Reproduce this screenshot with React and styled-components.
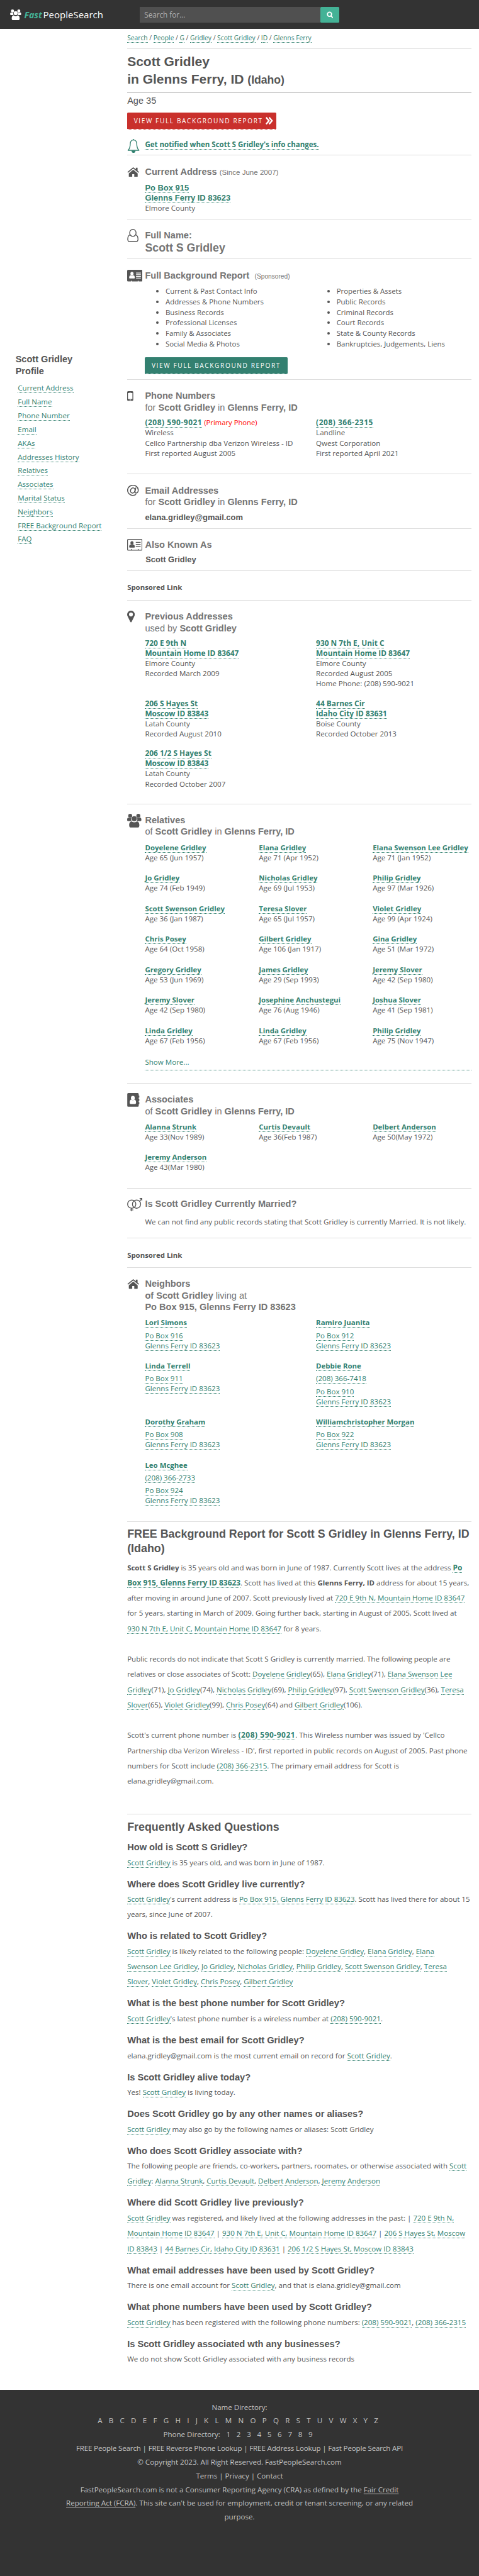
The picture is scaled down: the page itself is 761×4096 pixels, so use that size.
import React from 'react';
import styled, { createGlobalStyle } from 'styled-components';

const GlobalStyle = createGlobalStyle`
  html { font-size: 8.0855px; }
  body {
    margin: 0;
    background: #fff;
    color: #555;
    font-family: "Open Sans", "Noto Sans", sans-serif;
    -webkit-text-size-adjust: none;
  }
  * { box-sizing: border-box; }
  small, em, b, u { line-height: 0; }
`;

const heading = `font-family: "Liberation Sans", Arial, sans-serif; font-weight: 700;`;
/* a hairline is always a full device pixel; the negative margin keeps the rhythm at 0.1rem */
const hairline = (color = '#dcdcdc') => `border-bottom: 1px solid ${color}; margin-bottom: calc(0.1rem - 1px);`;

const Page = styled.div`
  display: flex;
  flex-direction: column;
  min-height: 506.6rem;
  font-size: 1.432rem;
  line-height: 2rem;
  white-space: nowrap;
  overflow: hidden;
`;

const Header = styled.header`
  display: flex;
  height: 5.7rem;
  background: #333;
`;
const Logo = styled.div`
  display: flex;
  width: 27.4rem;
  padding: 1.9rem 0 0 2rem;
  color: #fff;
  svg { width: 2.2rem; height: 2.1rem; }
`;
const LogoText = styled.div`
  margin-left: 0.55rem;
  font-size: 1.86rem;
  line-height: 2.2rem;
  em {
    color: #44b296;
    font-weight: 700;
    font-size: 1.76rem;
    margin-right: 0.2rem;
  }
`;
const SearchBox = styled.div`
  display: flex;
  width: 39.3rem;
  height: 3.1rem;
  margin-top: 1.3rem;
`;
const SearchInput = styled.div`
  flex: 1;
  padding-left: 0.95rem;
  background: #505050;
  color: #b0b0b0;
  font-size: 1.45rem;
  line-height: 3.2rem;
`;
const SearchButton = styled.div`
  display: flex;
  align-items: center;
  justify-content: center;
  width: 3.8rem;
  background: #44b296;
  border-radius: 0.2rem;
  svg { width: 1.3rem; height: 1.4rem; margin-top: 0.2rem; }
`;

const Body = styled.div`
  display: flex;
`;
const Sidebar = styled.aside`
  width: 25rem;
  padding: 63.8rem 0 0 3.05rem;
`;
const SidebarTitle = styled.h2`
  ${heading}
  margin: 0 0 0.9rem;
  font-size: 1.8rem;
  line-height: 2.3rem;
`;
const SidebarList = styled.ul`
  list-style: none;
  margin: 0;
  padding: 0 0 0 0.45rem;
  li { line-height: 2.7rem; }
`;
const Content = styled.main`
  width: 67.6rem;
`;

const A = styled.a`
  color: #328170;
  border-bottom: 1px dotted #328170;
  font-weight: ${(p) => (p.$bold ? 700 : 'inherit')};
  ${(p) => p.$bold && 'font-size: 1.414rem;'}
  ${(p) => p.$digits && 'font-size: 1.47rem; line-height: 0;'}
  ${(p) => p.$phone && 'font-size: 1.47rem; letter-spacing: 0.07rem; line-height: 0;'}
`;
const B = styled.b`
  font-size: 1.414rem;
`;

const Breadcrumb = styled.nav`
  height: 3.9rem;
  border-bottom: 1px solid #dcdcdc;
  font-size: 1.268rem;
  line-height: 3.6rem;
`;
const Title = styled.h1`
  ${heading}
  margin: 0.8rem 0 0;
  padding-bottom: 0.9rem;
  font-size: 2.6rem;
  line-height: 3.4rem;
  ${hairline('#949494')}
  small { font-size: 2.18rem; }
`;
const Age = styled.div`
  ${heading}
  font-weight: 400;
  font-size: 1.8rem;
  line-height: 3.3rem;
  margin-bottom: 0.7rem;
`;
const Button = styled.a`
  display: flex;
  align-items: center;
  width: ${(p) => p.$width};
  height: ${(p) => p.$height};
  padding-left: 1.3rem;
  background: ${(p) => p.$color};
  border-bottom: 1px dotted #fff;
  border-radius: 0.2rem 0.2rem 0 0;
  color: #fff;
  font-size: 1.25rem;
  letter-spacing: 0.2rem;
  svg { width: 1.5rem; height: 1.5rem; margin-left: 0.5rem; }
`;
const Notify = styled.div`
  display: flex;
  gap: 1rem;
  height: 5.1rem;
  padding-top: 1.9rem;
  border-bottom: 1px solid #dcdcdc;
  font-size: 1.422rem;
  line-height: 2.3rem;
  a { font-size: inherit; }
  svg { width: 2.5rem; height: 2.7rem; color: #328170; }
`;

const SectionBox = styled.section`
  display: grid;
  grid-template-columns: 3.5rem minmax(0, 1fr);
  padding-bottom: ${(p) => p.$bottom || '1rem'};
  ${hairline()}
`;
const IconSlot = styled.div`
  padding-top: ${(p) => p.$top};
  color: #555;
  svg { display: block; width: ${(p) => p.$w}rem; height: ${(p) => p.$h}rem; }
`;
const SectionBody = styled.div`
  padding-top: ${(p) => p.$top};
`;
const Heading = styled.h2`
  ${heading}
  margin: 0 0 ${(p) => p.$gap || '0.9rem'};
  color: #747474;
  font-size: 1.8rem;
  line-height: 2.3rem;
  span { font-weight: 400; }
`;
const Note = styled.small`
  font-weight: 400;
  font-size: ${(p) => p.$size};
  margin-left: ${(p) => p.$gap || 0};
`;
const BigName = styled.div`
  ${heading}
  color: #747474;
  font-size: 2.2rem;
  line-height: 2.5rem;
`;
const Strong = styled.div`
  ${heading}
  font-size: 1.6rem;
  line-height: 2rem;
  padding-left: ${(p) => p.$indent || 0};
  a { font-size: inherit; }
`;
const Grid = styled.div`
  display: grid;
  grid-template-columns: ${(p) => (p.$cols === 3 ? '22.37rem 22.37rem 22.37rem' : '33.6rem 33.6rem')};
`;
const Cell = styled.div`
  padding-bottom: ${(p) => p.$gap || '2rem'};
`;
const Block = styled.div`
  margin-top: 0.5rem;
`;
const Primary = styled.span`
  color: #f00;
  font-size: 1.395rem;
  line-height: 0;
`;
const Bullets = styled.ul`
  margin: 0;
  padding-left: 4.03rem;
  font-size: 1.413rem;
  li { line-height: 2.06rem; }
`;
const BulletRow = styled.div`
  display: grid;
  grid-template-columns: 33.6rem 33.6rem;
  margin-bottom: 1.55rem;
`;
const ShowMore = styled.a`
  display: block;
  margin-bottom: 1.5rem;
  padding-bottom: 0.17rem;
  border-bottom: 1px dotted #328170;
  color: #328170;
  line-height: 2.5rem;
`;
const Sponsored = styled.div`
  padding: 2.32rem 0 1.38rem;
  font-size: 1.41rem;
  font-weight: 700;
  ${hairline()}
`;

const Report = styled.section`
  padding-bottom: 1.94rem;
  ${hairline()}
`;
const BigHeading = styled.h2`
  ${heading}
  margin: 0 0 ${(p) => p.$bottom};
  padding-top: ${(p) => p.$top};
  font-size: 2.21rem;
  line-height: 2.8rem;
`;
const Text = styled.p`
  margin: 0 0 3rem;
  line-height: 3rem;
`;
const Question = styled.h3`
  ${heading}
  margin: 1.58rem 0 0.265rem;
  font-size: 1.812rem;
  line-height: 2.4rem;
`;
const Answer = styled.p`
  margin: 0;
  line-height: 3rem;
`;
const Tight = styled.span`
  letter-spacing: ${(p) => p.$by};
`;

const Footer = styled.footer`
  flex: 1;
  margin-top: 4.57rem;
  padding-top: 2rem;
  background: #333;
  color: #c3c3c3;
  text-align: center;
  line-height: 2.7rem;
  u { text-underline-offset: 0.2rem; }
`;
const Letters = styled.div`
  display: flex;
  justify-content: center;
  gap: ${(p) => p.$gap};
  padding-right: 0.6rem;
`;

/* icons */
const People = () => (
  <svg viewBox="0 0 28 27" fill="currentColor">
    <circle cx="6" cy="4" r="3.9" />
    <circle cx="22" cy="4" r="3.9" />
    <path d="M0 12c0-3 1-4.500 2.400-4.500 2 1.300 4.500 1.300 6 .6C7.300 10.500 8 13 9 14.200H2c-1.300 0-2-1-2-2.200zM28 12c0-3-1-4.500-2.400-4.500-2 1.300-4.500 1.300-6 .6 1.100 2.400.4 4.900-.6 6.100H26c1.300 0 2-1 2-2.200z" />
    <circle cx="14" cy="9.500" r="5" />
    <path d="M4 22.500c0-4.500 1.500-7.500 5-7.500 3 2.100 7 2.100 10 0 3.500 0 5 3 5 7.500 0 3-1 4.500-3.500 4.500h-13C5 27 4 25.500 4 22.500z" />
  </svg>
);
const Magnifier = () => (
  <svg viewBox="0 0 14 14" fill="none" stroke="#fff" strokeWidth="2.400" strokeLinecap="round">
    <circle cx="6" cy="5.800" r="4.400" />
    <path d="M9.500 9.500l3 3" />
  </svg>
);
const Chevrons = () => (
  <svg viewBox="0 0 15 15" fill="none" stroke="#fff" strokeWidth="3">
    <path d="M1 1l5.500 6.500L1 14M7 1l5.500 6.500L7 14" />
  </svg>
);
const Bell = () => (
  <svg viewBox="0 0 25 27" fill="none" stroke="currentColor" strokeWidth="1.700" strokeLinejoin="round">
    <path d="M12.500 2C8 2 6.300 5.500 6.100 9.500 6 15 5 19 1.800 22.300h21.400C20 19 19 15 18.900 9.500 18.700 5.500 17 2 12.500 2z" />
    <path d="M12.500 0v2" />
    <path d="M9.500 23.500a3 3 0 0 0 6 0z" fill="currentColor" />
  </svg>
);
const House = () => (
  <svg viewBox="0 0 24 19" fill="currentColor">
    <path d="M12 4.600L3.300 12v6c0 .6.4 1 1 1H10v-5.500h4V19h5.700c.6 0 1-.4 1-1v-6z" />
    <path d="M12.900.5a1.400 1.400 0 0 0-1.800 0L.5 9.400l1.200 1.500L12 2.400l10.300 8.500 1.200-1.500-3-2.500V.8h-3.400v3.300z" />
  </svg>
);
const User = () => (
  <svg viewBox="0 0 22 26" fill="none" stroke="currentColor" strokeWidth="1.700">
    <ellipse cx="11" cy="7.800" rx="6.300" ry="6.900" />
    <path d="M5.600 11.500C2.500 12.500.9 15.500.9 20c0 3 1.500 5.100 4.200 5.100h11.800c2.700 0 4.200-2.100 4.200-5.100 0-4.500-1.600-7.500-4.700-8.500" />
  </svg>
);
const Card = () => (
  <svg viewBox="0 0 30 23">
    <path fill="currentColor" d="M2 0h26a2 2 0 0 1 2 2v19a2 2 0 0 1-2 2h-5.500v-1.500h-1.600V23H9v-1.500H7.400V23H2a2 2 0 0 1-2-2V2a2 2 0 0 1 2-2z" />
    <g fill="#fff">
      <ellipse cx="9.500" cy="7.500" rx="3.100" ry="3.600" />
      <path d="M4 15.500c0-3 1-4.600 2.900-4.800 1.600 1.200 3.600 1.200 5.200 0 1.900.2 2.900 1.800 2.900 4.800 0 1-.6 1.600-1.500 1.600h-8c-.9 0-1.500-.6-1.500-1.600z" />
      <path d="M17.500 5.500H27V7h-9.500zM17.500 9H27v1.500h-9.500zM17.500 12.500H27V14h-9.500zM17.500 15.800H27v1.300h-9.500z" />
    </g>
  </svg>
);
const CardOutline = () => (
  <svg viewBox="0 0 30 23" fill="currentColor">
    <rect x="0.800" y="0.800" width="28.400" height="21.400" rx="1.500" fill="none" stroke="currentColor" strokeWidth="1.600" />
    <ellipse cx="9.500" cy="7.700" rx="3" ry="3.500" />
    <path d="M4 15.500c0-3 1-4.600 2.900-4.800 1.600 1.200 3.600 1.200 5.200 0 1.900.2 2.900 1.800 2.900 4.800 0 1-.6 1.600-1.500 1.600h-8c-.9 0-1.500-.6-1.500-1.600z" />
    <path d="M17 6h9.500v1.500H17zM17 9.800h9.500v1.500H17zM17 13.500h9.500V15H17zM7.500 19.800h1.600v2H7.500zM21 19.800h1.600v2H21z" />
  </svg>
);
const Mobile = () => (
  <svg viewBox="0 0 12 19">
    <path fill="currentColor" fillRule="evenodd" d="M2 0h8a2 2 0 0 1 2 2v15a2 2 0 0 1-2 2H2a2 2 0 0 1-2-2V2a2 2 0 0 1 2-2zM1.600 3.600v11.800h8.800V3.600zM4 1.600v.8h4v-.8zM6 16.200a1 1 0 1 0 0 2 1 1 0 0 0 0-2z" />
  </svg>
);
const At = () => (
  <svg viewBox="0 0 23 22" fill="none" stroke="currentColor" strokeWidth="1.900">
    <path d="M17.500 18.800A10.500 10 0 1 1 21.900 10c0 3.800-2.200 6-4.400 6-1.800 0-2.400-1.200-2-3l1.500-7.500" />
    <ellipse cx="11" cy="11" rx="4.300" ry="5.200" transform="rotate(18 11 11)" />
  </svg>
);
const Pin = () => (
  <svg viewBox="0 0 15 23" fill="currentColor">
    <path fillRule="evenodd" d="M7.500 0A7.300 7.300 0 0 1 15 7.300c0 1.400-.2 2.200-.8 3.400l-5.400 11.400a1.450 1.450 0 0 1-2.600 0L.8 10.700C.2 9.500 0 8.700 0 7.300A7.300 7.300 0 0 1 7.500 0zM7.500 3.700a3.800 3.800 0 1 0 0 7.600 3.800 3.800 0 0 0 0-7.600z" />
  </svg>
);
const Book = () => (
  <svg viewBox="0 0 24 27">
    <path fill="currentColor" d="M2 0h18.500a2 2 0 0 1 2 2v3h1.200v4h-1.200v2.500h1.200v4h-1.200V18h1.200v4h-1.200v3a2 2 0 0 1-2 2H2a2 2 0 0 1-2-2V2a2 2 0 0 1 2-2z" />
    <ellipse cx="11" cy="9.800" rx="3.800" ry="4.300" fill="#fff" />
    <path fill="#fff" d="M4.700 19c0-4 1.200-5.800 3.300-6 1.900 1.500 4.100 1.500 6 0 2.100.2 3.300 2 3.300 6 0 1.600-.7 2.600-2 2.600H6.700c-1.300 0-2-1-2-2.600z" />
  </svg>
);
const Rings = () => (
  <svg viewBox="0 0 30 26" fill="none" stroke="currentColor" strokeWidth="1.600">
    <circle cx="9" cy="12" r="8.100" />
    <circle cx="18.500" cy="12" r="8.100" />
    <path d="M9 20v6M6 23.300h6M24.300 6.300L29 1M24.500.9H29.200V6" />
  </svg>
);

function Section({ icon, iconTop, w, h, top, bottom, children }) {
  return (
    <SectionBox $bottom={bottom}>
      <IconSlot $top={iconTop} $w={w} $h={h}>{icon}</IconSlot>
      <SectionBody $top={top}>{children}</SectionBody>
    </SectionBox>
  );
}

const crumbs = ['Search', 'People', 'G', 'Gridley', 'Scott Gridley', 'ID', 'Glenns Ferry'];
const profileLinks = ['Current Address', 'Full Name', 'Phone Number', 'Email', 'AKAs', 'Addresses History', 'Relatives', 'Associates', 'Marital Status', 'Neighbors', 'FREE Background Report', 'FAQ'];
const reportLeft = ['Current & Past Contact Info', 'Addresses & Phone Numbers', 'Business Records', 'Professional Licenses', 'Family & Associates', 'Social Media & Photos'];
const reportRight = ['Properties & Assets', 'Public Records', 'Criminal Records', 'Court Records', 'State & County Records', 'Bankruptcies, Judgements, Liens'];
const previous = [
  ['720 E 9th N', 'Mountain Home ID 83647', 'Elmore County', 'Recorded March 2009'],
  ['930 N 7th E, Unit C', 'Mountain Home ID 83647', 'Elmore County', 'Recorded August 2005', 'Home Phone: (208) 590-9021'],
  ['206 S Hayes St', 'Moscow ID 83843', 'Latah County', 'Recorded August 2010'],
  ['44 Barnes Cir', 'Idaho City ID 83631', 'Boise County', 'Recorded October 2013'],
  ['206 1/2 S Hayes St', 'Moscow ID 83843', 'Latah County', 'Recorded October 2007'],
];
const relatives = [
  ['Doyelene Gridley', 'Age 65 (Jun 1957)'], ['Elana Gridley', 'Age 71 (Apr 1952)'], ['Elana Swenson Lee Gridley', 'Age 71 (Jan 1952)'],
  ['Jo Gridley', 'Age 74 (Feb 1949)'], ['Nicholas Gridley', 'Age 69 (Jul 1953)'], ['Philip Gridley', 'Age 97 (Mar 1926)'],
  ['Scott Swenson Gridley', 'Age 36 (Jan 1987)'], ['Teresa Slover', 'Age 65 (Jul 1957)'], ['Violet Gridley', 'Age 99 (Apr 1924)'],
  ['Chris Posey', 'Age 64 (Oct 1958)'], ['Gilbert Gridley', 'Age 106 (Jan 1917)'], ['Gina Gridley', 'Age 51 (Mar 1972)'],
  ['Gregory Gridley', 'Age 53 (Jun 1969)'], ['James Gridley', 'Age 29 (Sep 1993)'], ['Jeremy Slover', 'Age 42 (Sep 1980)'],
  ['Jeremy Slover', 'Age 42 (Sep 1980)'], ['Josephine Anchustegui', 'Age 76 (Aug 1946)'], ['Joshua Slover', 'Age 41 (Sep 1981)'],
  ['Linda Gridley', 'Age 67 (Feb 1956)'], ['Linda Gridley', 'Age 67 (Feb 1956)'], ['Philip Gridley', 'Age 75 (Nov 1947)'],
];
const associates = [
  ['Alanna Strunk', 'Age 33(Nov 1989)'], ['Curtis Devault', 'Age 36(Feb 1987)'], ['Delbert Anderson', 'Age 50(May 1972)'],
  ['Jeremy Anderson', 'Age 43(Mar 1980)'],
];
const neighbors = [
  ['Lori Simons', null, 'Po Box 916'], ['Ramiro Juanita', null, 'Po Box 912'],
  ['Linda Terrell', null, 'Po Box 911'], ['Debbie Rone', '(208) 366-7418', 'Po Box 910'],
  ['Dorothy Graham', null, 'Po Box 908'], ['Williamchristopher Morgan', null, 'Po Box 922'],
  ['Leo Mcghee', '(208) 366-2733', 'Po Box 924'],
];

const Scott = () => <A>Scott Gridley</A>;
const faq = [
  ['How old is Scott S Gridley?', <><Scott /> is 35 years old, and was born in June of 1987.</>],
  ['Where does Scott Gridley live currently?', <><Tight $by="-0.006rem"><Scott />'s current address is <A>Po Box 915, Glenns Ferry ID 83623</A>. Scott has lived there for about 15</Tight><br />years, since June of 2007.</>],
  ['Who is related to Scott Gridley?', <><Scott /> is likely related to the following people: <A>Doyelene Gridley</A>, <A>Elana Gridley</A>, <A>Elana<br />Swenson Lee Gridley</A>, <A>Jo Gridley</A>, <A>Nicholas Gridley</A>, <A>Philip Gridley</A>, <A>Scott Swenson Gridley</A>, <A>Teresa<br />Slover</A>, <A>Violet Gridley</A>, <A>Chris Posey</A>, <A>Gilbert Gridley</A></>],
  ['What is the best phone number for Scott Gridley?', <><Scott />'s latest phone number is a wireless number at <A>(208) 590-9021</A>.</>],
  ['What is the best email for Scott Gridley?', <>elana.gridley@gmail.com is the most current email on record for <Scott />.</>],
  ['Is Scott Gridley alive today?', <>Yes! <Scott /> is living today.</>],
  ['Does Scott Gridley go by any other names or aliases?', <><Scott /> may also go by the following names or aliases: Scott Gridley</>],
  ['Who does Scott Gridley associate with?', <>The following people are friends, co-workers, partners, roomates, or otherwise associated with <A>Scott<br />Gridley</A>: <A>Alanna Strunk</A>, <A>Curtis Devault</A>, <A>Delbert Anderson</A>, <A>Jeremy Anderson</A></>],
  ['Where did Scott Gridley live previously?', <><Scott /> was registered, and likely lived at the following addresses in the past: | <A>720 E 9th N,<br />Mountain Home ID 83647</A> | <A>930 N 7th E, Unit C, Mountain Home ID 83647</A> | <A>206 S Hayes St, Moscow<br />ID 83843</A> | <A>44 Barnes Cir, Idaho City ID 83631</A> | <A>206 1/2 S Hayes St, Moscow ID 83843</A></>],
  ['What email addresses have been used by Scott Gridley?', <>There is one email account for <Scott />, and that is elana.gridley@gmail.com</>],
  ['What phone numbers have been used by Scott Gridley?', <><Scott /> has been registered with the following phone numbers: <A>(208) 590-9021</A>, <A>(208) 366-2315</A></>],
  ['Is Scott Gridley associated wth any businesses?', <>We do not show Scott Gridley associated with any business records</>],
];

export default function App() {
  return (
    <Page>
      <GlobalStyle />
      <Header>
        <Logo>
          <People />
          <LogoText><em>Fast</em>PeopleSearch</LogoText>
        </Logo>
        <SearchBox>
          <SearchInput>Search for...</SearchInput>
          <SearchButton><Magnifier /></SearchButton>
        </SearchBox>
      </Header>
      <Body>
        <Sidebar>
          <SidebarTitle>Scott Gridley<br />Profile</SidebarTitle>
          <SidebarList>
            {profileLinks.map((l) => <li key={l}><A>{l}</A></li>)}
          </SidebarList>
        </Sidebar>
        <Content>
          <Breadcrumb>
            {crumbs.map((c, i) => (
              <React.Fragment key={c}>{i > 0 && ' / '}<A>{c}</A></React.Fragment>
            ))}
          </Breadcrumb>
          <Title>Scott Gridley<br />in Glenns Ferry, ID <small>(Idaho)</small></Title>
          <Age>Age 35</Age>
          <Button $color="#c9302c" $width="29.3rem" $height="3.3rem">VIEW FULL BACKGROUND REPORT<Chevrons /></Button>
          <Notify>
            <Bell />
            <div><A $bold>Get notified when Scott S Gridley's info changes.</A></div>
          </Notify>

          <Section icon={<House />} iconTop="2.3rem" w={2.4} h={1.9} top="2rem" bottom="1.05rem">
            <Heading $gap="1.05rem">Current Address <Note $size="1.43rem">(Since June 2007)</Note></Heading>
            <Strong><A>Po Box 915</A><br /><A>Glenns Ferry ID 83623</A></Strong>
            Elmore County
          </Section>

          <Section icon={<User />} iconTop="1.97rem" w={2.25} h={2.6} top="2.05rem" bottom="0.95rem">
            <Heading $gap="0">Full Name:</Heading>
            <BigName>Scott S Gridley</BigName>
          </Section>

          <Section icon={<Card />} iconTop="2.1rem" w={3} h={2.3} top="2.05rem">
            <Heading $gap="0.97rem">Full Background Report <Note $size="1.26rem" $gap="0.55rem">(Sponsored)</Note></Heading>
            <BulletRow>
              <Bullets>{reportLeft.map((t) => <li key={t}>{t}</li>)}</Bullets>
              <Bullets>{reportRight.map((t) => <li key={t}>{t}</li>)}</Bullets>
            </BulletRow>
            <Button $color="#338070" $width="28rem" $height="3.35rem">VIEW FULL BACKGROUND REPORT</Button>
          </Section>

          <Section icon={<Mobile />} iconTop="2.3rem" w={1.2} h={1.9} top="2.05rem">
            <Heading $gap="0.85rem">Phone Numbers<br /><span>for</span> Scott Gridley <span>in</span> Glenns Ferry, ID</Heading>
            <Grid>
              <Cell>
                <A $bold $phone>(208) 590-9021</A> <Primary>(Primary Phone)</Primary><br />
                Wireless<br />Cellco Partnership dba Verizon Wireless - ID<br />First reported August 2005
              </Cell>
              <Cell>
                <A $bold $phone>(208) 366-2315</A><br />
                Landline<br />Qwest Corporation<br />First reported April 2021
              </Cell>
            </Grid>
          </Section>

          <Section icon={<At />} iconTop="2.14rem" w={2.3} h={2.2} top="2.05rem" bottom="1.05rem">
            <Heading>Email Addresses<br /><span>for</span> Scott Gridley <span>in</span> Glenns Ferry, ID</Heading>
            <Strong>elana.gridley@gmail.com</Strong>
          </Section>

          <Section icon={<CardOutline />} iconTop="2.1rem" w={3} h={2.3} top="2rem" bottom="1.05rem">
            <Heading $gap="0.85rem">Also Known As</Heading>
            <Strong $indent="0.1rem">Scott Gridley</Strong>
          </Section>

          <Sponsored>Sponsored Link</Sponsored>

          <Section icon={<Pin />} iconTop="2.1rem" w={1.5} h={2.3} top="2.05rem">
            <Heading $gap="0.8rem">Previous Addresses<br /><span>used by</span> Scott Gridley</Heading>
            <Grid>
              {previous.map(([street, city, ...rest]) => (
                <Cell key={street} $gap="1.85rem">
                  <A $bold $digits>{street}</A><br /><A $bold $digits>{city}</A>
                  {rest.map((r) => <React.Fragment key={r}><br />{r}</React.Fragment>)}
                </Cell>
              ))}
            </Grid>
          </Section>

          <Section icon={<People />} iconTop="1.95rem" w={2.8} h={2.7} top="2rem">
            <Heading $gap="0.95rem">Relatives<br /><span>of</span> Scott Gridley <span>in</span> Glenns Ferry, ID</Heading>
            <Grid $cols={3}>
              {relatives.map(([name, age], i) => <Cell key={i}><A $bold>{name}</A><br />{age}</Cell>)}
            </Grid>
            <ShowMore>Show More...</ShowMore>
          </Section>

          <Section icon={<Book />} iconTop="1.9rem" w={2.45} h={2.7} top="2rem">
            <Heading $gap="0.95rem">Associates<br /><span>of</span> Scott Gridley <span>in</span> Glenns Ferry, ID</Heading>
            <Grid $cols={3}>
              {associates.map(([name, age]) => <Cell key={name}><A $bold>{name}</A><br />{age}</Cell>)}
            </Grid>
          </Section>

          <Section icon={<Rings />} iconTop="1.87rem" w={3} h={2.6} top="1.95rem" bottom="2.15rem">
            <Heading $gap="1.3rem">Is Scott Gridley Currently Married?</Heading>
            We can not find any public records stating that Scott Gridley is currently Married. It is not likely.
          </Section>

          <Sponsored>Sponsored Link</Sponsored>

          <Section icon={<House />} iconTop="2.3rem" w={2.4} h={1.9} top="2rem">
            <Heading $gap="0.95rem">Neighbors<br />of Scott Gridley <span>living at</span><br />Po Box 915, Glenns Ferry ID 83623</Heading>
            <Grid>
              {neighbors.map(([name, phone, box]) => (
                <Cell key={name}>
                  <A $bold>{name}</A>
                  {phone && <Block><A>{phone}</A></Block>}
                  <Block><A>{box}</A><br /><A>Glenns Ferry ID 83623</A></Block>
                </Cell>
              ))}
            </Grid>
          </Section>

          <Report>
            <BigHeading $top="1.1rem" $bottom="0.86rem">FREE Background Report for Scott S Gridley in Glenns Ferry, ID<br />(Idaho)</BigHeading>
            <Text>
              <B>Scott S Gridley</B> is 35 years old and was born in June of 1987. Currently Scott lives at the address <A $bold $digits>Po<br />
              Box 915, Glenns Ferry ID 83623</A>. Scott has lived at this <B>Glenns Ferry, ID</B> address for about 15 years,<br />
              after moving in around June of 2007. Scott previously lived at <A>720 E 9th N, Mountain Home ID 83647</A><br />
              for 5 years, starting in March of 2009. Going further back, starting in August of 2005, Scott lived at<br />
              <A>930 N 7th E, Unit C, Mountain Home ID 83647</A> for 8 years.
            </Text>
            <Text>
              Public records do not indicate that Scott S Gridley is currently married. The following people are<br />
              relatives or close associates of Scott: <A>Doyelene Gridley</A>(65), <A>Elana Gridley</A>(71), <A>Elana Swenson Lee<br />
              Gridley</A>(71), <A>Jo Gridley</A>(74), <A>Nicholas Gridley</A>(69), <A>Philip Gridley</A>(97), <A>Scott Swenson Gridley</A>(36), <A>Teresa<br />
              Slover</A>(65), <A>Violet Gridley</A>(99), <A>Chris Posey</A>(64) and <A>Gilbert Gridley</A>(106).
            </Text>
            <Text>
              Scott's current phone number is <A $bold $phone>(208) 590-9021</A>. This Wireless number was issued by 'Cellco<br />
              Partnership dba Verizon Wireless - ID', first reported in public records on August of 2005. Past phone<br />
              numbers for Scott include <A>(208) 366-2315</A>. The primary email address for Scott is<br />
              elana.gridley@gmail.com.
            </Text>
          </Report>

          <BigHeading $top="1.05rem" $bottom="-0.13rem">Frequently Asked Questions</BigHeading>
          {faq.map(([q, a]) => (
            <React.Fragment key={q}>
              <Question>{q}</Question>
              <Answer>{a}</Answer>
            </React.Fragment>
          ))}
        </Content>
      </Body>
      <Footer>
        Name Directory:
        <Letters $gap="1.27rem">{'ABCDEFGHIJKLMNOPQRSTUVWXYZ'.split('').map((l) => <span key={l}>{l}</span>)}</Letters>
        <Letters $gap="1.2rem"><span>Phone Directory:</span>{'123456789'.split('').map((l) => <span key={l}>{l}</span>)}</Letters>
        <Tight $by="-0.018rem">FREE People Search | FREE Reverse Phone Lookup | FREE Address Lookup | Fast People Search API</Tight><br />
        © Copyright 2023. All Right Reserved. FastPeopleSearch.com<br />
        Terms | Privacy | Contact<br />
        FastPeopleSearch.com is not a Consumer Reporting Agency (CRA) as defined by the <u>Fair Credit<br />
        Reporting Act (FCRA)</u>. This site can't be used for employment, credit or tenant screening, or any related<br />
        purpose.
      </Footer>
    </Page>
  );
}
